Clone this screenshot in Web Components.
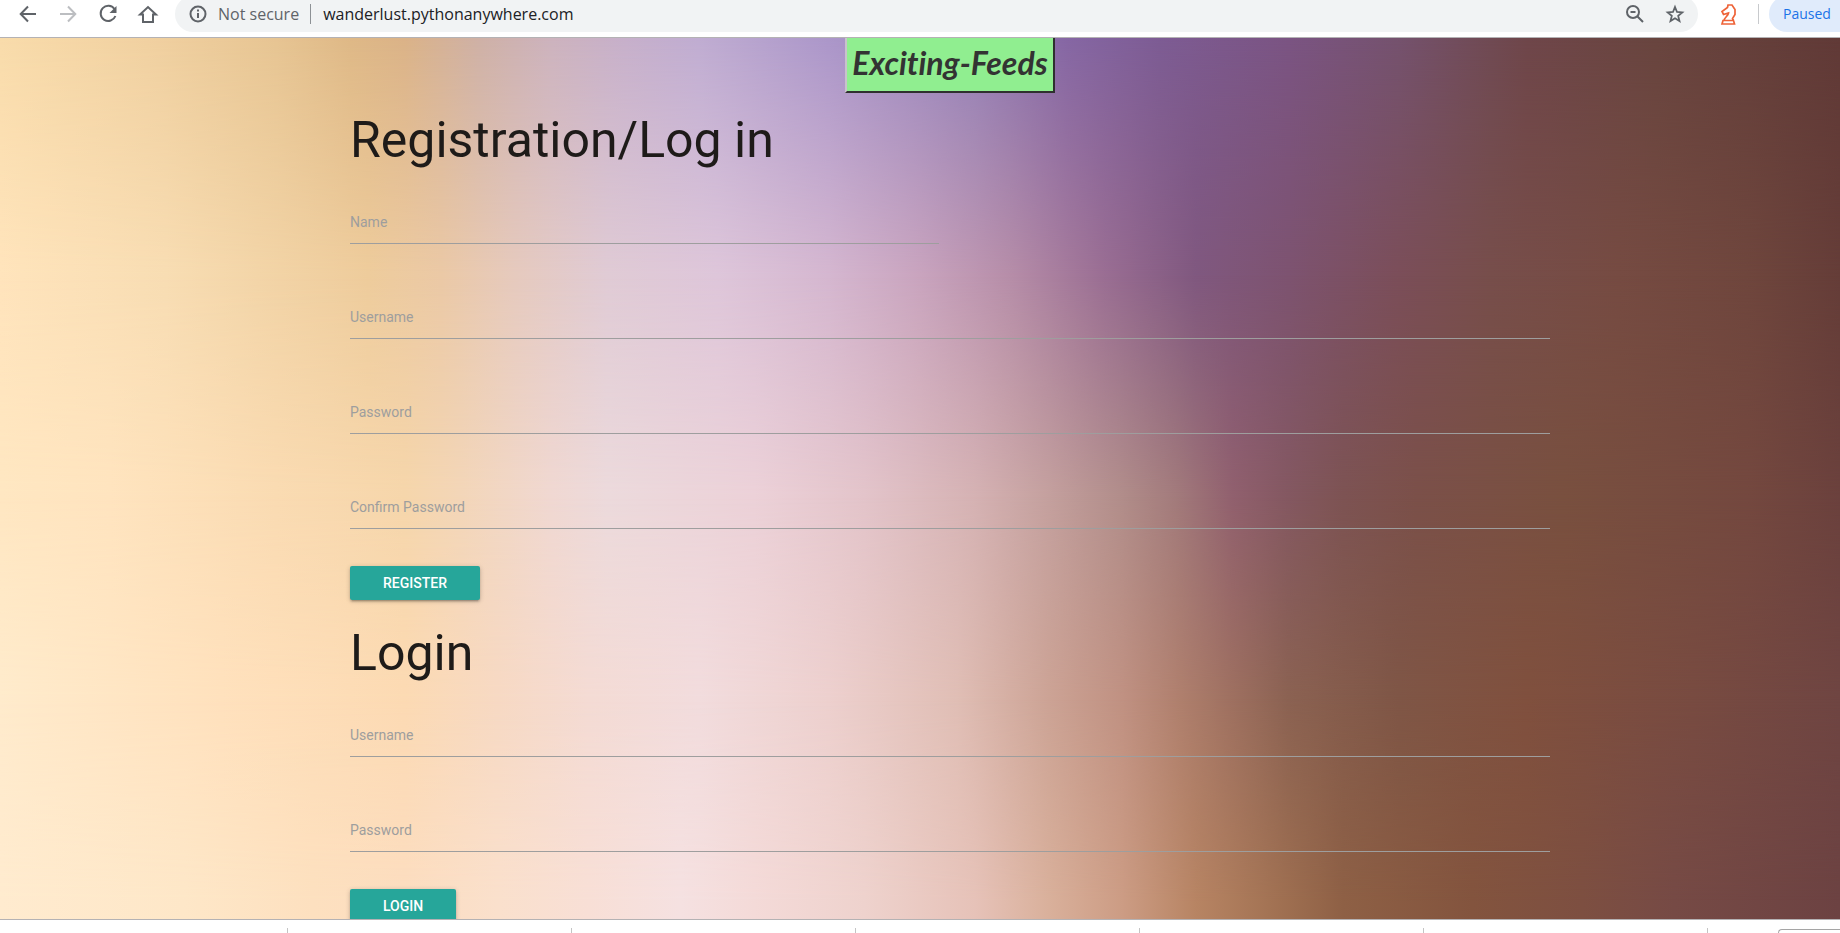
<!DOCTYPE html>
<html lang="en">
<head>
<meta charset="utf-8">
<title>Exciting-Feeds</title>
<style>
html,body{margin:0;height:100%}
body{font-family:Roboto,"Liberation Sans",sans-serif;overflow:hidden;background:#fff}
</style>
</head>
<body>
<app-window></app-window>
<script>
const define = (name, html, setup) => customElements.define(name, class extends HTMLElement {
  connectedCallback() {
    if (this.shadowRoot) return;
    const t = document.createElement('template');
    t.innerHTML = html;
    this.attachShadow({mode: 'open'}).append(t.content.cloneNode(true));
    if (setup) setup(this, this.shadowRoot);
  }
});

define('browser-bar', `
<style>
:host{display:flex;align-items:center;height:37px;padding-left:16px;background:#fff;border-bottom:1px solid #b4b2b4;box-sizing:content-box;font-family:"Open Sans","Noto Sans",sans-serif;font-size:16px;color:#5f6368;overflow:hidden}
nav{display:flex;gap:16px;margin-right:15px;padding-bottom:10px}
button{border:0;padding:0;background:none;color:inherit;font:inherit;display:block}
svg{display:block;width:24px;height:24px;fill:none;stroke:currentColor;stroke-width:2}
button[disabled]{color:#bcbec1}
.omni{flex:1;display:flex;align-items:center;height:36px;border-radius:18px;background:#f1f3f4;margin-bottom:10px;padding:0 11px;min-width:0}
.omni label{margin-left:8px}
.bar{width:1px;height:20px;background:#8d9195;margin:0 12px 0 11px}
input{flex:1;min-width:0;border:0;padding:0;background:none;font:inherit;color:#202124;outline:0;height:24px}
.tools{display:flex;gap:16px}
.ext{margin:0 18px 10px}
.sep{width:1px;height:20px;background:#c8cacd;margin:0 10px 10px 0}
.paused{width:71px;height:36px;box-sizing:border-box;margin-bottom:10px;padding-left:14px;border-radius:18px 0 0 18px;background:#e0ebfb;color:#1a73e8;text-align:left;font-size:14px}
</style>
<nav>
<button aria-label="Back"><svg viewBox="0 0 24 24"><path d="M20 12H5M12 4.500L4.700 12l7.300 7.500"/></svg></button>
<button aria-label="Forward" disabled><svg viewBox="0 0 24 24"><path d="M4 12h15M12 4.500l7.300 7.500-7.300 7.500"/></svg></button>
<button aria-label="Reload"><svg viewBox="0 0 24 24"><path d="M18.500 7A7.600 7.600 0 1 0 19.400 14"/><path d="M20.500 4v7h-7z" fill="currentColor" stroke="none"/></svg></button>
<button aria-label="Home"><svg viewBox="0 0 24 24"><path d="M4 12.500h3V20h10v-7.500h3L12 5z"/></svg></button>
</nav>
<div class="omni">
<svg viewBox="0 0 24 24"><circle cx="12" cy="12" r="7.500"/><path d="M12 11v5M12 7.500v2"/></svg>
<label for="url">Not secure</label><span class="bar"></span>
<input id="url" value="wanderlust.pythonanywhere.com" spellcheck="false">
<div class="tools">
<button aria-label="Zoom"><svg viewBox="0 0 24 24"><circle cx="10" cy="10" r="6"/><path d="M14.500 14.500l5.500 5.500M7.500 10h5"/></svg></button>
<button aria-label="Bookmark"><svg viewBox="0 0 24 24"><path d="M12 5l2 5 5.300.400-4.100 3.500 1.300 5.200L12 16.300l-4.500 2.800 1.300-5.200-4.100-3.500L10 10z" stroke-width="1.800"/></svg></button>
</div>
</div>
<button class="ext" aria-label="Extension"><svg viewBox="0 0 24 24"><path d="M7 18.500h10.500l1 3.500H6zM8 18.500c.500-3 4-4.500 4.500-7.500l-5 1.500L6 9.500l5.500-4 .500-2.500h4l3 4.500v5l-2.500 4 1 2" stroke="#ee6338" stroke-width="1.700"/></svg></button>
<span class="sep"></span>
<button class="paused">Paused</button>
`);

define('blurred-backdrop', `
<style>
:host{display:grid;height:100%;isolation:isolate}
div{grid-area:1/1}
</style>`, (el, root) => {
  // Each row is a horizontal blend; masks fade one row into the next.
  const rows = [
    [0, '#f9dcab 0,#f1d1a1 8%,#e7c593 15%,#dfb987 19%,#dbb388 22%,#cfb1a6 26%,#cdb3be 30%,#c7b0cb 34%,#c0add2 38%,#ac97ca 45%,#9480b7 53%,#8667a4 58%,#7d5c94 63%,#7b5483 70%,#75526e 76%,#704a53 81%,#6f464a 83%,#69453f 90%,#613a37 100%'],
    [27, '#ffe4bc 0,#f8ddb3 9%,#f3d5a8 14%,#eecc9c 20%,#ebc9a6 24%,#e6cabe 28%,#e0cbd5 33%,#dec6da 39%,#d5b7d0 45%,#c9a4be 50%,#b68da8 55%,#9a6e93 60%,#80587f 65%,#7d5370 70%,#7b4e59 76%,#774e4b 81%,#764b42 88%,#6f463d 95%,#653d38 100%'],
    [52, '#ffe7c2 0,#ffe4bf 6%,#fadbb2 15%,#f6d6ab 22%,#f3d6b8 25%,#f0d8d2 30%,#ecdadc 33%,#ecd1d8 41%,#e3c4ca 47%,#d5b2b3 53%,#c4a09e 57%,#b18d8a 61%,#a27a7b 64%,#91606e 67%,#845861 70%,#7d5353 73%,#7b5049 77%,#79503f 85%,#74483f 95%,#6b413d 100%'],
    [75, '#ffebcc 0,#ffe1bd 12%,#fcdab3 22%,#f7d9c3 27%,#f4dbd4 32%,#f2dcdd 38%,#edd0ce 45%,#e0beb5 52%,#cca395 57%,#c09182 61%,#b0806e 64%,#9e7060 67%,#8b6252 70%,#7f5646 76%,#80503e 83%,#784b41 92%,#6f4542 100%'],
    [98, '#ffebcf 0,#fee7c8 10%,#fde0bf 17%,#fcddc0 22%,#fae0cc 27%,#f8dfd6 32%,#f5e1e1 37%,#f4dad8 41%,#eed2cd 47%,#e6c2b8 53%,#d9b09b 57%,#cc9c84 61%,#b78463 65%,#a37354 69%,#8e6045 73%,#83543e 80%,#7d4f41 86%,#764a45 91%,#6c4242 100%']
  ];
  rows.forEach(([y, stops], i) => {
    const d = document.createElement('div');
    d.style.background = `linear-gradient(to right,${stops})`;
    if (i) d.style.maskImage = `linear-gradient(to bottom,transparent ${rows[i-1][0]}%,#000 ${y}%)`;
    root.append(d);
  });
});

define('brand-badge', `
<style>
:host{display:block;box-sizing:border-box;height:55px;padding:0 5px;background:#90ee90;border:solid #2f2f2f;border-width:0 2px 2px 2px;border-left-color:#c9c2cc;color:#333;font:italic 700 32px/50px Lato,cursive;font-variant-ligatures:none;white-space:nowrap}
</style><slot></slot>`);

define('page-heading', `
<style>
:host{display:block}
h1{margin:0;font-weight:400;font-size:50px;line-height:56px;color:#1e1b19}
</style><h1><slot></slot></h1>`);

define('text-field', `
<style>
:host{display:grid;height:36px;box-sizing:border-box;border-bottom:1px solid #9e9e9e}
label,input{grid-area:1/1}
label{font-size:14px;line-height:28px;color:#9e9e9e;pointer-events:none}
input{border:0;padding:0;margin:0;background:none;outline:0;min-width:0;font:14px Roboto,sans-serif}
</style><label for="f"></label><input id="f">`, (el, root) => {
  root.querySelector('label').textContent = el.getAttribute('label');
  root.querySelector('input').type = el.getAttribute('type') || 'text';
});

define('raised-button', `
<style>
:host{display:block}
button{display:block;height:34px;padding:0 33px;border:0;border-radius:2px;background:#26a69a;color:#fff;font:500 14px/32px Roboto,sans-serif;box-shadow:0 2px 2px rgba(0,0,0,.14),0 3px 1px -2px rgba(0,0,0,.12),0 1px 5px rgba(0,0,0,.2);text-transform:uppercase}
</style><button><slot></slot></button>`);

define('entry-form', `
<style>
:host{display:block}
form{display:grid;grid-template-columns:1fr 1fr;column-gap:22px;row-gap:59px;margin:40px 0 37px}
::slotted(text-field){grid-column:1/-1}
::slotted(text-field[half]){grid-column:1}
.actions{display:flex}
</style>
<page-heading><slot name="title"></slot></page-heading>
<form><slot></slot></form>
<div class="actions"><slot name="action"></slot></div>`);

define('feeds-page', `
<style>
:host{display:grid;overflow:hidden;min-height:0}
blurred-backdrop,main{grid-area:1/1;min-height:0}
main{z-index:1;padding:0 290px 0 350px;overflow:hidden}
header{display:flex;justify-content:center;margin-bottom:19px}
entry-form+entry-form{margin-top:25px}
@media(max-width:1100px){main{padding:0 8%}}
</style>
<blurred-backdrop></blurred-backdrop>
<main>
<header><brand-badge>Exciting-Feeds</brand-badge></header>
<entry-form><span slot="title">Registration/Log in</span>
<text-field half label="Name"></text-field><text-field label="Username"></text-field><text-field label="Password" type="password"></text-field><text-field label="Confirm Password" type="password"></text-field>
<raised-button slot="action">Register</raised-button></entry-form>
<entry-form><span slot="title">Login</span>
<text-field label="Username"></text-field><text-field label="Password" type="password"></text-field>
<raised-button slot="action">Login</raised-button></entry-form>
</main>`);

define('shelf-strip', `
<style>
:host{display:flex;height:13px;background:#fff;border-top:1px solid #b4b2b4;padding-left:4px;overflow:hidden}
i{flex:0 0 283px;height:5px;margin-top:8px;border-right:1px solid #c4c4c4}
b{flex:1;margin:9px 0 0 70px;border:solid #a5a5a5;border-width:1px 0 0 1px;border-radius:5px 0 0 0}
</style><i></i><i></i><i></i><i></i><i></i><i></i><b></b>`);

define('app-window', `
<style>
:host{display:grid;grid-template-rows:auto minmax(0,1fr) auto;height:100vh}
</style>
<browser-bar></browser-bar><feeds-page></feeds-page><shelf-strip></shelf-strip>`);
</script>
</body>
</html>
